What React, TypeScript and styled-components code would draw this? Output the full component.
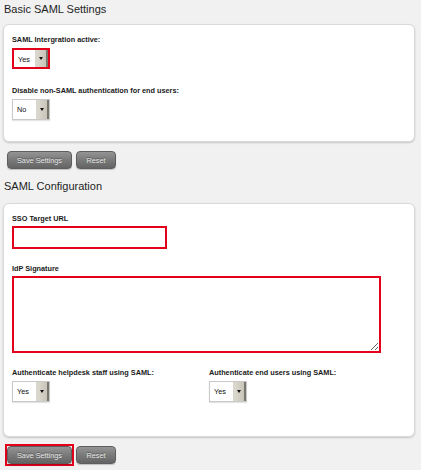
import React from "react";
import styled, { createGlobalStyle } from "styled-components";

const GlobalStyle = createGlobalStyle`
  html, body { margin: 0; padding: 0; background: #f1f1f1; }
  body { font-family: "Liberation Sans", Arial, sans-serif; }
`;

const Page = styled.div`
  width: 412px;
  padding: 0 6px 4px 3px;
  background: #f1f1f1;
`;

const SectionTitle = styled.h2<{ $top: number; $height: number }>`
  margin: 0;
  padding: ${(p) => p.$top}px 0 0 1px;
  height: ${(p) => p.$height}px;
  box-sizing: border-box;
  font-size: 11px;
  line-height: 13px;
  font-weight: normal;
  color: #1e1e1e;
`;

const Card = styled.div<{ $height: number }>`
  box-sizing: border-box;
  height: ${(p) => p.$height}px;
  background: #fff;
  border: 1px solid #d9d9d9;
  border-radius: 6px;
  box-shadow: 0 1px 2px rgba(0, 0, 0, 0.18);
  padding: 10px 8px 0 8px;
`;

const Field = styled.div<{ $gap: number }>`
  display: flex;
  flex-direction: column;
  align-items: flex-start;
  margin-bottom: ${(p) => p.$gap}px;
`;

const Label = styled.label<{ $mb?: number }>`
  font-size: 7.3px;
  line-height: 9px;
  font-weight: bold;
  color: #1a1a1a;
  margin-bottom: ${(p) => p.$mb ?? 4}px;
`;

const SelectBox = styled.div<{ $hl?: boolean }>`
  box-sizing: border-box;
  width: 38px;
  height: 21px;
  display: flex;
  background: #fff;
  border: ${(p) => (p.$hl ? "2px solid #e3001b" : "1px solid #c9c9c9")};
  box-shadow: ${(p) => (p.$hl ? "none" : "0 1px 1px rgba(0,0,0,0.1)")};
`;

const SelectValue = styled.span`
  flex: 1;
  font-size: 7.3px;
  line-height: 19px;
  padding-left: 4px;
  color: #111;
`;

const SelectArrow = styled.span`
  width: 10px;
  display: flex;
  align-items: center;
  justify-content: center;
  background: linear-gradient(to right, #dcd9d0, #c8c4b8);
  border-left: 1px solid #d8d5cc;
  border-right: 2px solid #7a776e;
  &::after {
    content: "";
    border-left: 2.5px solid transparent;
    border-right: 2.5px solid transparent;
    border-top: 3px solid #111;
  }
`;

const TextInput = styled.input`
  box-sizing: border-box;
  width: 155px;
  height: 23px;
  border: 2px solid #e3001b;
  outline: none;
  background: #fff;
  padding: 0 4px;
`;

const TextArea = styled.textarea`
  box-sizing: border-box;
  width: 369px;
  height: 77px;
  border: 2px solid #e3001b;
  outline: none;
  background: #fff;
  resize: both;
  padding: 2px;
`;

const Columns = styled.div`
  display: grid;
  grid-template-columns: 197px 1fr;
`;

const ButtonRow = styled.div<{ $top: number; $height: number }>`
  display: flex;
  align-items: center;
  gap: 4px;
  height: ${(p) => p.$height}px;
  padding: ${(p) => p.$top}px 0 0 4px;
`;

const Highlight = styled.div<{ $on?: boolean }>`
  display: flex;
  margin-left: ${(p) => (p.$on ? "-2px" : "0")};
  margin-right: ${(p) => (p.$on ? "-2px" : "0")};
  border: ${(p) => (p.$on ? "2px solid #e3001b" : "none")};
`;

const Button = styled.button<{ $w: number }>`
  box-sizing: border-box;
  width: ${(p) => p.$w}px;
  height: 18px;
  padding: 0;
  border: 1px solid #5e5e5e;
  border-radius: 4px;
  background: linear-gradient(to bottom, #949494 0%, #7a7a7a 50%, #646464 100%);
  color: #e6e6e6;
  font-family: "Liberation Sans", Arial, sans-serif;
  font-size: 7.3px;
  text-shadow: 0 -1px 0 rgba(0, 0, 0, 0.35);
  box-shadow: 0 1px 1px rgba(0, 0, 0, 0.2);
`;

const Select = ({ value, hl }: { value: string; hl?: boolean }) => (
  <SelectBox $hl={hl}>
    <SelectValue>{value}</SelectValue>
    <SelectArrow />
  </SelectBox>
);

export default function App() {
  return (
    <>
      <GlobalStyle />
      <Page>
        <SectionTitle $top={3} $height={24}>
          Basic SAML Settings
        </SectionTitle>
        <Card $height={118}>
          <Field $gap={17}>
            <Label>SAML Intergration active:</Label>
            <Select value="Yes" hl />
          </Field>
          <Field $gap={0}>
            <Label>Disable non-SAML authentication for end users:</Label>
            <Select value="No" />
          </Field>
        </Card>
        <ButtonRow $top={9} $height={18}>
          <Highlight>
            <Button $w={65}>Save Settings</Button>
          </Highlight>
          <Button $w={40}>Reset</Button>
        </ButtonRow>
        <SectionTitle $top={11} $height={34}>
          SAML Configuration
        </SectionTitle>
        <Card $height={234}>
          <Field $gap={15}>
            <Label $mb={3}>SSO Target URL</Label>
            <TextInput />
          </Field>
          <Field $gap={15}>
            <Label $mb={3}>IdP Signature</Label>
            <TextArea />
          </Field>
          <Columns>
            <Field $gap={0}>
              <Label>Authenticate helpdesk staff using SAML:</Label>
              <Select value="Yes" />
            </Field>
            <Field $gap={0}>
              <Label>Authenticate end users using SAML:</Label>
              <Select value="Yes" />
            </Field>
          </Columns>
        </Card>
        <ButtonRow $top={7} $height={22}>
          <Highlight $on>
            <Button $w={65}>Save Settings</Button>
          </Highlight>
          <Button $w={40}>Reset</Button>
        </ButtonRow>
      </Page>
    </>
  );
}
